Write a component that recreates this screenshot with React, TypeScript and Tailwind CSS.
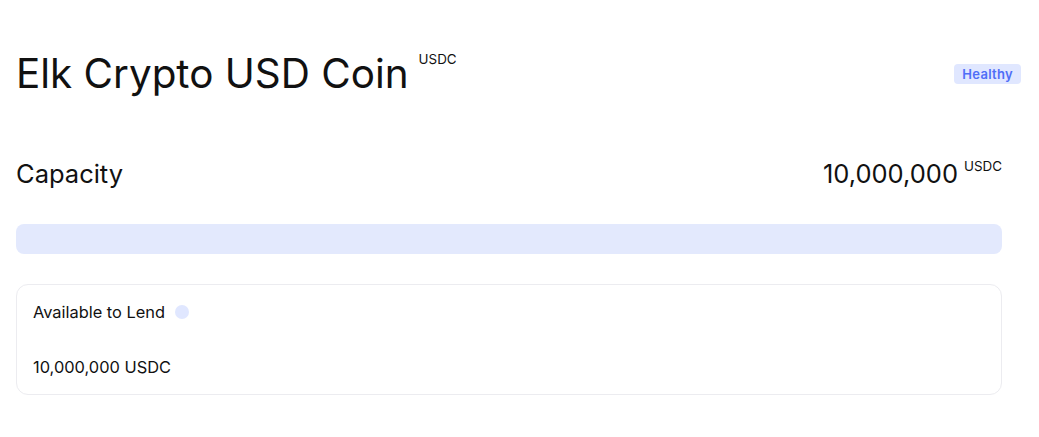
export default function App() {
  return (
    <div
      className="w-[1039px] h-[437px] bg-white text-[#111] pl-4 pr-[18px] pt-[50px]"
      style={{ fontFamily: "Inter, 'Noto Sans', sans-serif" }}
    >
      <div className="flex items-start justify-between">
        <div className="flex items-start">
          <h1 className="text-[40.4px] leading-[48px] font-normal">
            Elk Crypto USD Coin
          </h1>
          <span className="ml-[10px] mt-[1px] text-[13.4px] leading-4">USDC</span>
        </div>
        <span className="mt-[14px] rounded-[4px] bg-[#e0e7ff] px-2 py-[1px] text-[13px] font-semibold leading-[18px] text-[#4f6ef7] tracking-[0.3px]">
          Healthy
        </span>
      </div>

      <div className="mr-[19px]">
        <div className="mt-[60px] flex items-start justify-between">
          <span className="text-[25.5px] leading-8">Capacity</span>
          <div className="flex items-start">
            <span className="text-[25.5px] leading-8">10,000,000</span>
            <span className="ml-[6px] text-[13.4px] leading-4">USDC</span>
          </div>
        </div>

        <div className="mt-[34px] h-[30px] rounded-lg bg-[#e3e9fd]" />

        <div className="mt-[30px] h-[111px] rounded-xl border border-[#ececf0] px-4 pt-[15px]">
          <div className="flex items-center">
            <span className="text-[16.4px] leading-6">Available to Lend</span>
            <span className="ml-[10px] h-[14px] w-[14px] rounded-full bg-[#e0e7ff]" />
          </div>
          <div className="mt-[31px] text-[16.4px] leading-6">10,000,000 USDC</div>
        </div>
      </div>
    </div>
  );
}
